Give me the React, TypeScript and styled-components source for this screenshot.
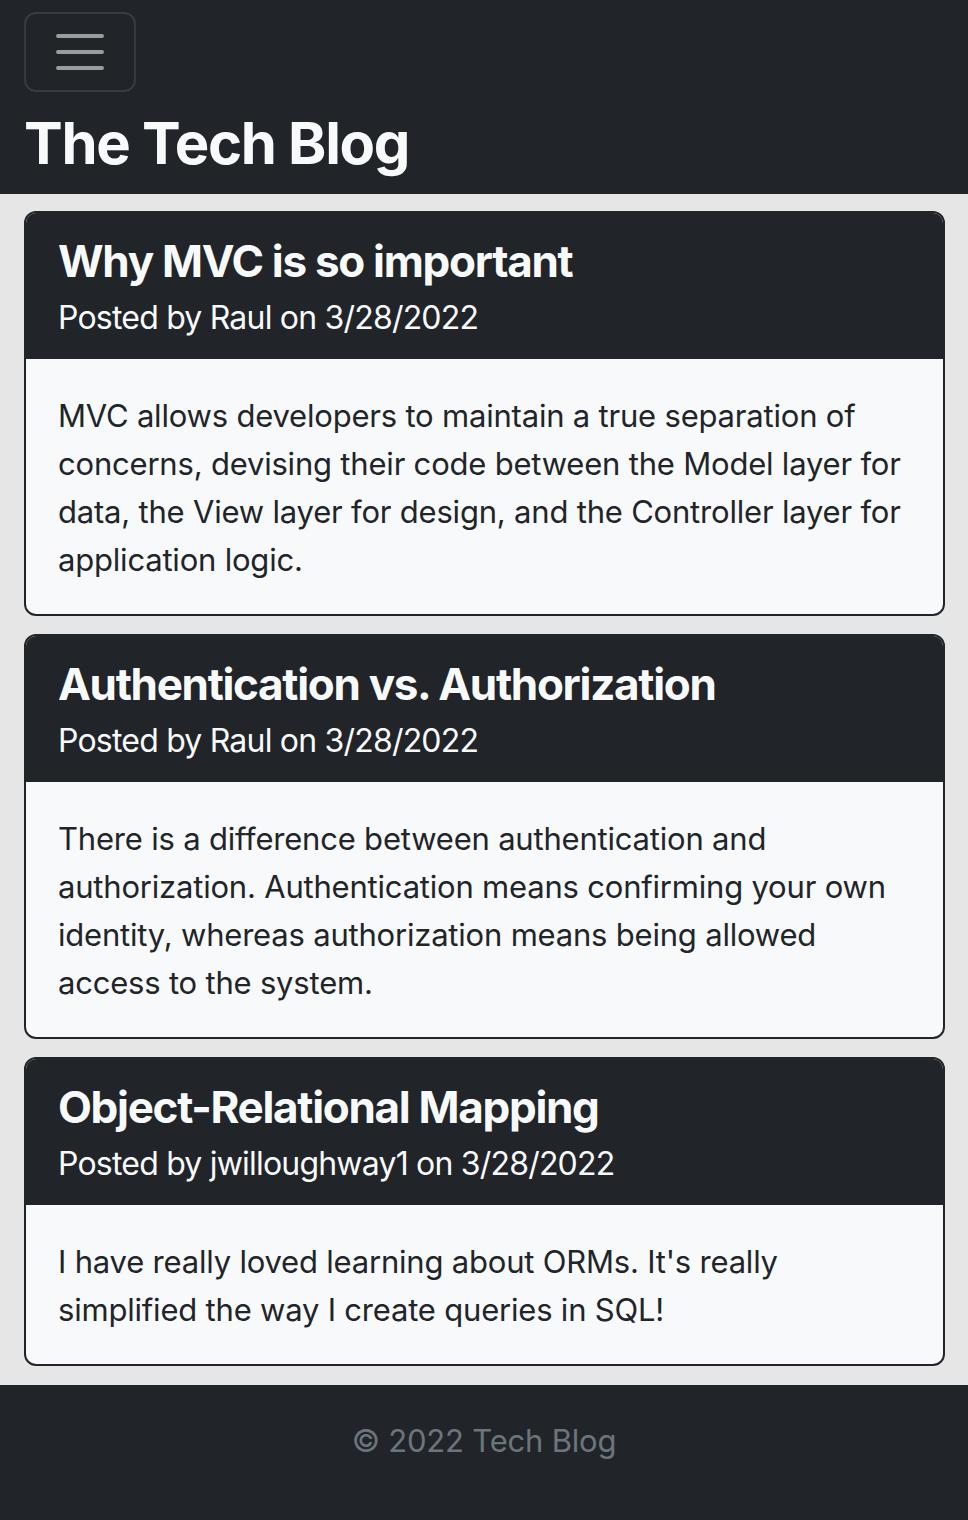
import React from "react";
import styled, { createGlobalStyle } from "styled-components";

const Global = createGlobalStyle`
  html, body { margin: 0; padding: 0; background: #212529; }
  body { font-family: Inter, "Noto Sans", "Liberation Sans", sans-serif; -webkit-font-smoothing: antialiased; }
  * { box-sizing: border-box; }
`;

const Page = styled.div`
  display: flex;
  flex-direction: column;
  min-height: 1520px;
  background: #e6e6e6;
`;

const NavBar = styled.header`
  background: #212529;
  padding: 12px 24px 16px;
  display: flex;
  flex-direction: column;
  align-items: flex-start;
  gap: 16px;
`;

const Toggler = styled.button`
  width: 112px;
  height: 80px;
  border: 2px solid rgba(255, 255, 255, 0.1);
  border-radius: 12px;
  background: transparent;
  display: flex;
  align-items: center;
  justify-content: center;
  padding: 0;
  cursor: pointer;
`;

const Brand = styled.h1`
  margin: 0;
  color: #f8f9fa;
  font-size: 58px;
  font-weight: 700;
  line-height: 70px;
  letter-spacing: -1.3px;
`;

const Main = styled.main`
  flex: 1;
  padding: 17px 23px 17px 24px;
  display: flex;
  flex-direction: column;
  gap: 18px;
`;

const Card = styled.article`
  border: 2px solid #212529;
  border-radius: 12px;
  overflow: hidden;
  background: #f8f9fa;
`;

const CardHeader = styled.div`
  background: #212529;
  padding: 20px 32px 17px;
  display: flex;
  flex-direction: column;
  gap: 4px;
`;

const PostTitle = styled.h3`
  margin: 0;
  color: #f8f9fa;
  font-size: 44px;
  font-weight: 700;
  line-height: 57px;
  letter-spacing: -1.3px;
`;

const Meta = styled.h5`
  margin: 0;
  color: #f8f9fa;
  font-size: 32px;
  font-weight: 400;
  line-height: 48px;
  letter-spacing: -0.8px;
`;

const CardBody = styled.div`
  padding: 33px 32px 30px;
`;

const Text = styled.p`
  margin: 0;
  color: #212529;
  font-size: 31px;
  line-height: 48px;
  letter-spacing: -0.2px;
`;

const Footer = styled.footer`
  background: #212529;
  padding: 32px 24px 55px;
  text-align: center;
  color: #6c757d;
  font-size: 31px;
  line-height: 48px;
  letter-spacing: -0.2px;
`;

const posts = [
  {
    title: "Why MVC is so important",
    author: "Raul",
    date: "3/28/2022",
    body: "MVC allows developers to maintain a true separation of concerns, devising their code between the Model layer for data, the View layer for design, and the Controller layer for application logic.",
  },
  {
    title: "Authentication vs. Authorization",
    author: "Raul",
    date: "3/28/2022",
    body: "There is a difference between authentication and authorization. Authentication means confirming your own identity, whereas authorization means being allowed access to the system.",
  },
  {
    title: "Object-Relational Mapping",
    author: "jwilloughway1",
    date: "3/28/2022",
    body: "I have really loved learning about ORMs. It's really simplified the way I create queries in SQL!",
  },
];

const MenuIcon = () => (
  <svg width="60" height="60" viewBox="0 0 30 30" aria-hidden="true">
    <path
      d="M4 7h22M4 15h22M4 23h22"
      stroke="rgba(255,255,255,0.55)"
      strokeWidth="2"
      strokeLinecap="round"
    />
  </svg>
);

export default function App() {
  return (
    <Page>
      <Global />
      <NavBar>
        <Toggler aria-label="Toggle navigation">
          <MenuIcon />
        </Toggler>
        <Brand>The Tech Blog</Brand>
      </NavBar>
      <Main>
        {posts.map((p) => (
          <Card key={p.title}>
            <CardHeader>
              <PostTitle>{p.title}</PostTitle>
              <Meta>
                Posted by {p.author} on {p.date}
              </Meta>
            </CardHeader>
            <CardBody>
              <Text>{p.body}</Text>
            </CardBody>
          </Card>
        ))}
      </Main>
      <Footer>© 2022 Tech Blog</Footer>
    </Page>
  );
}
